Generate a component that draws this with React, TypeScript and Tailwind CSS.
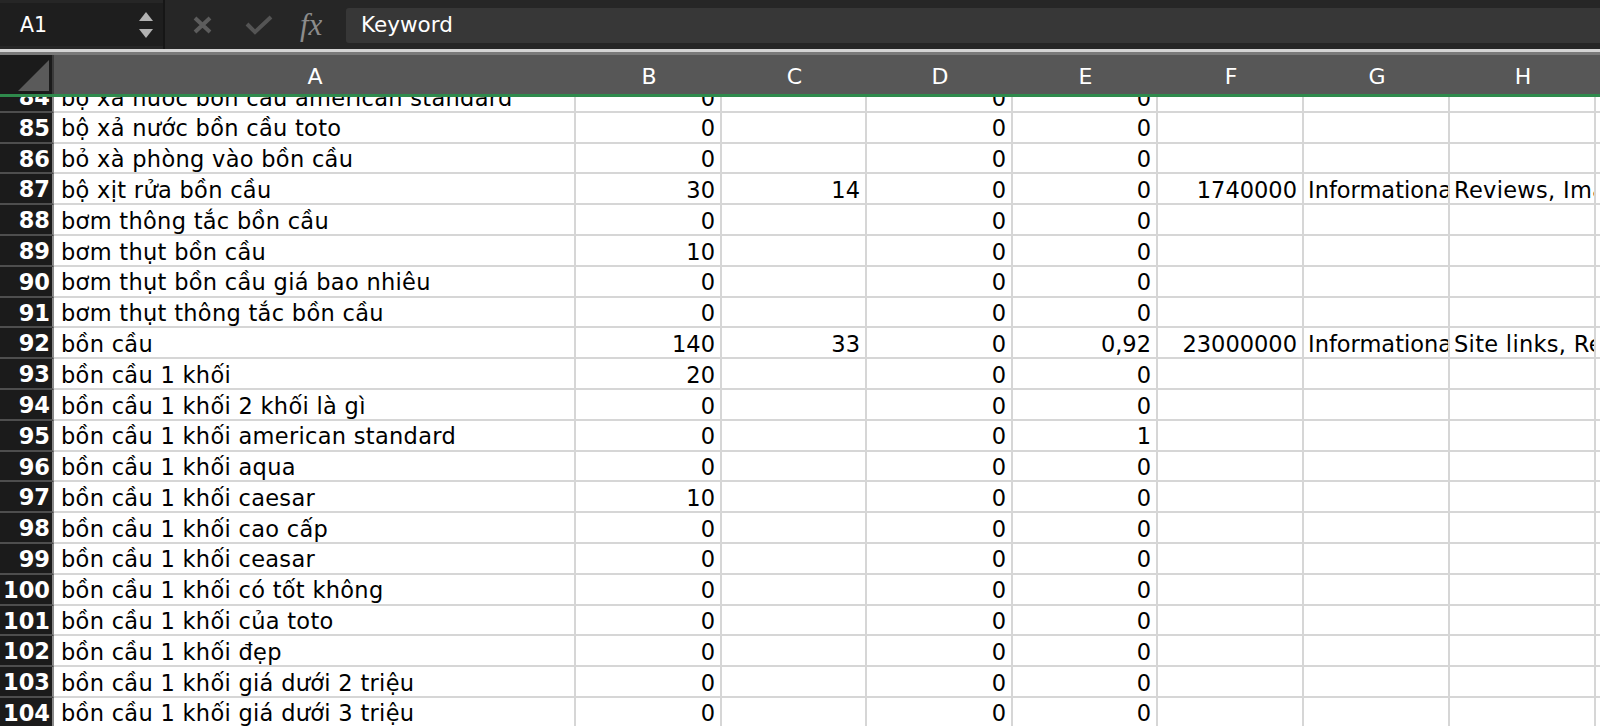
import React from 'react';

type Row = {
  n: number;
  a: string;
  b?: string;
  c?: string;
  d?: string;
  e?: string;
  f?: string;
  g?: string;
  h?: string;
};

const rows: Row[] = [
  { n: 84, a: 'bộ xả nước bồn cầu american standard', b: '0', d: '0', e: '0' },
  { n: 85, a: 'bộ xả nước bồn cầu toto', b: '0', d: '0', e: '0' },
  { n: 86, a: 'bỏ xà phòng vào bồn cầu', b: '0', d: '0', e: '0' },
  { n: 87, a: 'bộ xịt rửa bồn cầu', b: '30', c: '14', d: '0', e: '0', f: '1740000', g: 'Informational', h: 'Reviews, Images' },
  { n: 88, a: 'bơm thông tắc bồn cầu', b: '0', d: '0', e: '0' },
  { n: 89, a: 'bơm thụt bồn cầu', b: '10', d: '0', e: '0' },
  { n: 90, a: 'bơm thụt bồn cầu giá bao nhiêu', b: '0', d: '0', e: '0' },
  { n: 91, a: 'bơm thụt thông tắc bồn cầu', b: '0', d: '0', e: '0' },
  { n: 92, a: 'bồn cầu', b: '140', c: '33', d: '0', e: '0,92', f: '23000000', g: 'Informational', h: 'Site links, Reviews' },
  { n: 93, a: 'bồn cầu 1 khối', b: '20', d: '0', e: '0' },
  { n: 94, a: 'bồn cầu 1 khối 2 khối là gì', b: '0', d: '0', e: '0' },
  { n: 95, a: 'bồn cầu 1 khối american standard', b: '0', d: '0', e: '1' },
  { n: 96, a: 'bồn cầu 1 khối aqua', b: '0', d: '0', e: '0' },
  { n: 97, a: 'bồn cầu 1 khối caesar', b: '10', d: '0', e: '0' },
  { n: 98, a: 'bồn cầu 1 khối cao cấp', b: '0', d: '0', e: '0' },
  { n: 99, a: 'bồn cầu 1 khối ceasar', b: '0', d: '0', e: '0' },
  { n: 100, a: 'bồn cầu 1 khối có tốt không', b: '0', d: '0', e: '0' },
  { n: 101, a: 'bồn cầu 1 khối của toto', b: '0', d: '0', e: '0' },
  { n: 102, a: 'bồn cầu 1 khối đẹp', b: '0', d: '0', e: '0' },
  { n: 103, a: 'bồn cầu 1 khối giá dưới 2 triệu', b: '0', d: '0', e: '0' },
  { n: 104, a: 'bồn cầu 1 khối giá dưới 3 triệu', b: '0', d: '0', e: '0' },
];

const font = { fontFamily: '"DejaVu Sans", Verdana, sans-serif' };

const NumCell: React.FC<{ w: string; children?: React.ReactNode }> = ({ w, children }) => (
  <div className={`${w} shrink-0 h-full border-r-2 border-[#d6d6d6] flex items-center justify-end pr-[5px] pt-[4px]`}>
    {children}
  </div>
);

const ColHead: React.FC<{ w: string; children: React.ReactNode }> = ({ w, children }) => (
  <div className={`${w} shrink-0 h-full flex items-center justify-center pt-[3px]`}>{children}</div>
);

const App: React.FC = () => {
  return (
    <div className="w-[1600px] h-[726px] overflow-hidden flex flex-col bg-white text-[22.5px] text-black" style={font}>
      {/* formula bar */}
      <div className="h-[49px] shrink-0 bg-[#262626] flex items-stretch">
        <div className="w-[163px] shrink-0 bg-[#1e1e1e] my-[3px] flex items-center pl-[20px] pr-[10px] text-white text-[20.5px]">
          <span className="flex-1 pt-[1px]">A1</span>
          <div className="flex flex-col gap-[8px]">
            <svg width="14" height="9" viewBox="0 0 14 9"><path d="M7 0 L14 9 L0 9 Z" fill="#b2b2b2" /></svg>
            <svg width="14" height="9" viewBox="0 0 14 9"><path d="M0 0 L14 0 L7 9 Z" fill="#b2b2b2" /></svg>
          </div>
        </div>
        <div className="w-[2px] shrink-0 bg-[#161616]" />
        <div className="w-[181px] shrink-0 flex items-center">
          <svg className="ml-[28px]" width="19" height="18" viewBox="0 0 19 18">
            <path d="M2 2 L17 16 M17 2 L2 16" stroke="#5c5c5c" strokeWidth="4" strokeLinecap="butt" />
          </svg>
          <svg className="ml-[33px]" width="28" height="20" viewBox="0 0 28 20">
            <path d="M2 9 L10 17 L26 2" stroke="#545454" strokeWidth="4" fill="none" />
          </svg>
          <span
            className="ml-[27px] text-[#8c8c8c] text-[31px] italic leading-none"
            style={{ fontFamily: '"Liberation Serif", "DejaVu Serif", serif' }}
          >
            fx
          </span>
        </div>
        <div className="flex-1 bg-[#373737] mt-[8px] mb-[6px] rounded-l-[3px] flex items-center pl-[15px] text-white text-[21.5px]">
          Keyword
        </div>
      </div>
      {/* divider */}
      <div className="h-[3px] shrink-0 bg-[#d4d4d4]" />
      <div className="h-[3px] shrink-0 bg-[#7a7a7a]" />
      {/* column header */}
      <div className="h-[42px] shrink-0 flex bg-[#575757] border-b-[3px] border-[#2f8a4c] text-white text-[22px]">
        <div className="w-[54px] shrink-0 h-full bg-[#1b1b1b] border-r-2 border-[#3a3a3a] flex items-end justify-end pr-[3px] pb-[3px]">
          <svg width="31" height="31" viewBox="0 0 31 31"><path d="M31 0 L31 31 L0 31 Z" fill="#5a5a5a" /></svg>
        </div>
        <ColHead w="w-[522px]">A</ColHead>
        <ColHead w="w-[146px]">B</ColHead>
        <ColHead w="w-[145px]">C</ColHead>
        <ColHead w="w-[146px]">D</ColHead>
        <ColHead w="w-[145px]">E</ColHead>
        <ColHead w="w-[146px]">F</ColHead>
        <ColHead w="w-[146px]">G</ColHead>
        <ColHead w="w-[146px]">H</ColHead>
        <ColHead w="w-[146px]">I</ColHead>
      </div>
      {/* grid */}
      <div className="flex-1 overflow-hidden">
        <div className="-mt-[15px]">
          {rows.map((r) => (
            <div key={r.n} className="h-[30.8px] flex border-b-2 border-[#d6d6d6]">
              <div className="w-[54px] shrink-0 h-[calc(100%+2px)] -mb-[2px] bg-[#1b1b1b] border-b-2 border-[#4e4e4e] border-r-2 border-r-[#8a8a8a] flex items-center justify-end pr-[2px] pt-[3px] text-white font-bold">
                {r.n}
              </div>
              <div className="w-[522px] shrink-0 h-full border-r-2 border-[#d6d6d6] flex items-center pl-[7px] pt-[4px] tracking-[0.3px] whitespace-nowrap overflow-hidden">
                {r.a}
              </div>
              <NumCell w="w-[146px]">{r.b}</NumCell>
              <NumCell w="w-[145px]">{r.c}</NumCell>
              <NumCell w="w-[146px]">{r.d}</NumCell>
              <NumCell w="w-[145px]">{r.e}</NumCell>
              <NumCell w="w-[146px]">{r.f}</NumCell>
              <div className="w-[146px] shrink-0 h-full border-r-2 border-[#d6d6d6] flex items-center pl-[4px] pt-[4px] whitespace-nowrap overflow-hidden">
                {r.g}
              </div>
              <div className="w-[146px] shrink-0 h-full border-r-2 border-[#d6d6d6] flex items-center pl-[4px] pt-[4px] tracking-[0.3px] whitespace-nowrap overflow-hidden">
                {r.h}
              </div>
              <div className="w-[146px] shrink-0 h-full border-r-2 border-[#d6d6d6]" />
            </div>
          ))}
        </div>
      </div>
    </div>
  );
};

export default App;
